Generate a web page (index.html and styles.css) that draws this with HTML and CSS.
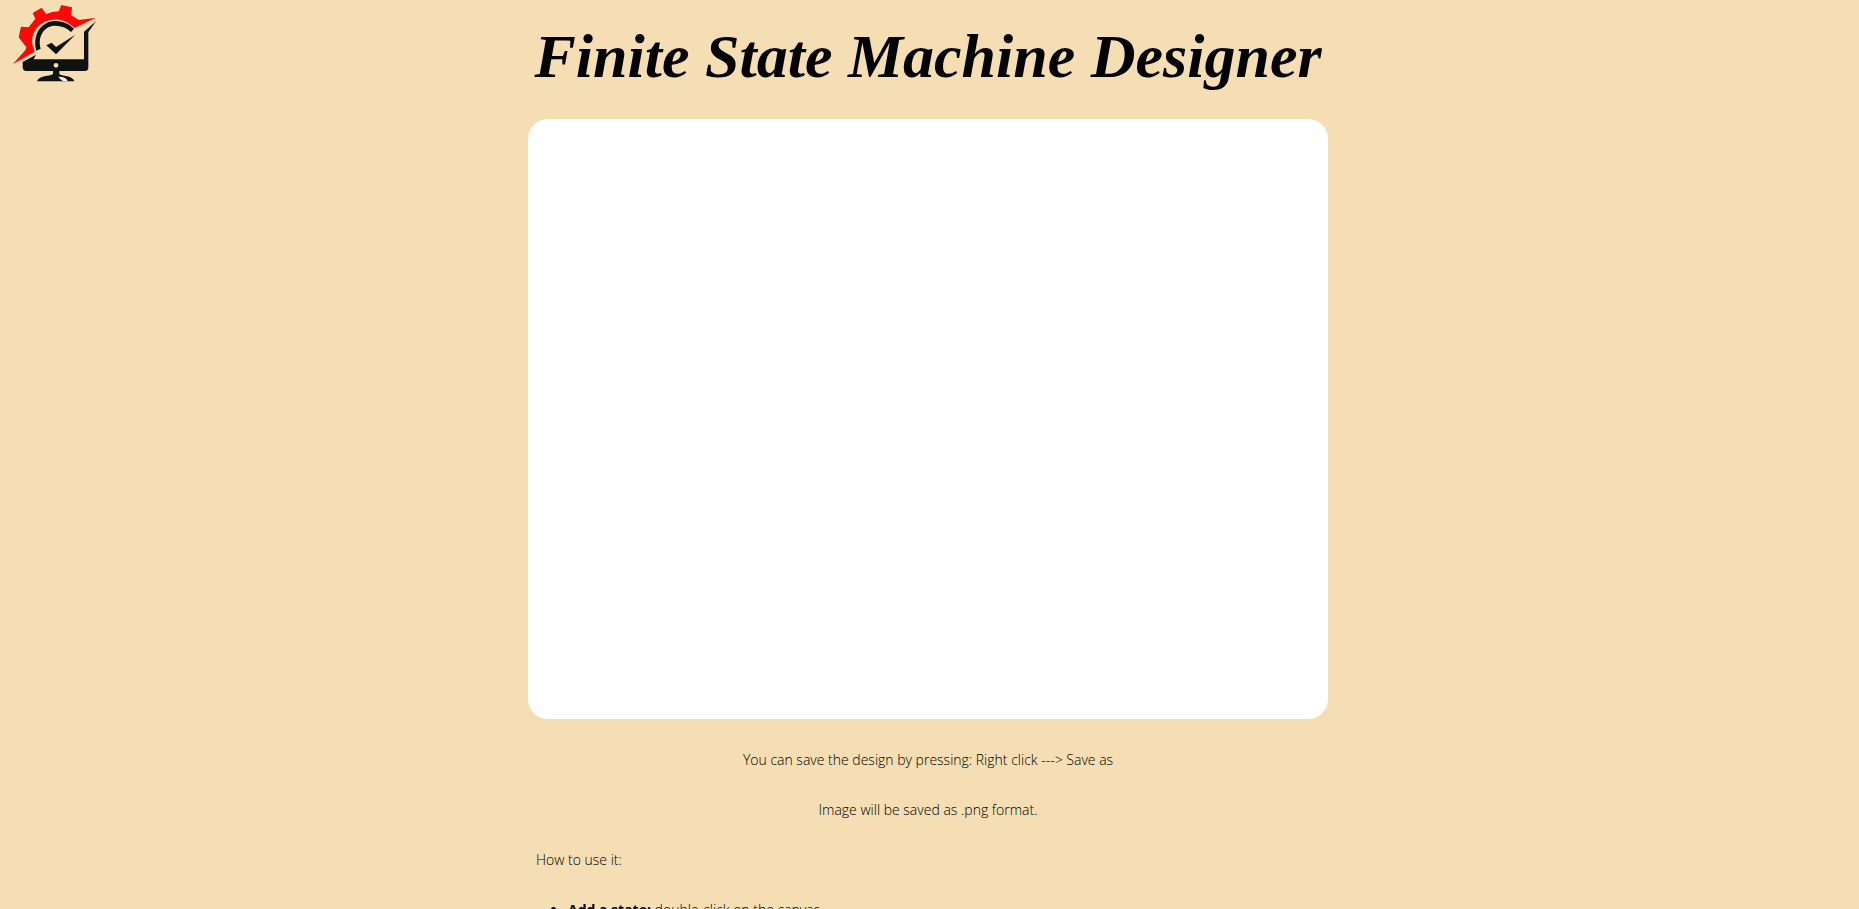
FILE: index.html
```html
<!DOCTYPE html>
<html lang="en">
<head>
  <meta charset="utf-8">
  <title>Finite State Machine Designer</title>
  <link rel="stylesheet" href="styles.css">
</head>
<body>
  <svg class="logo" viewBox="0 0 330 270" role="img" aria-label="Logo">
    <path fill="#fb0808" d="M39 192L77 149L79 142L56 112L63 80L86 82L106 56L98 39L125 23L138 42Q157 34 176 34L184 15L216 22L214 46L236 60L288 53L224 84L205 70Q184 57 161 59C118 61 90 98 98 136L104 155L94 161Z"/>
    <path fill="#101211" d="M109 152C96 104 124 63 166 63Q200 63 222 86L213 96Q193 77 166 77C133 77 112 108 122 146Z"/>
    <path fill="#101211" d="M139 136L155 128L168 141L226 104L168 163Z"/>
    <path fill="#101211" d="M68 186L108 164L101 178H252V95L288 64L265 97V204Q264 213 255 213H178V221Q180 225 197 228Q220 232 223 244H111Q114 232 138 228Q157 225 159 221V213H79Q68 213 68 201Z"/>
    <circle cx="168" cy="196" r="7" fill="#f5deb3"/>
    <path fill="#f9f1df" d="M175 230Q201 230 203 244H194Q184 243 175 230Z"/>
  </svg>
  <main class="page">
    <h1 class="title">Finite State Machine Designer</h1>
    <canvas class="board" width="800" height="600"></canvas>
    <section class="help">
      <p class="note">You can save the design by pressing: Right click ---&gt; Save as</p>
      <p class="note">Image will be saved as .png format.</p>
      <p>How to use it:</p>
      <ul class="steps">
        <li><b>Add a state:</b> double-click on the canvas</li>
      </ul>
    </section>
  </main>
</body>
</html>
```
FILE: styles.css
```css
html {
  height: 100%;
  overflow: hidden;
}

body {
  margin: 0;
  height: 100%;
  overflow: hidden;
  background: #f5deb3;
  color: #000;
  font: 300 14px/20px "Segoe UI", "Open Sans", sans-serif;
}

.logo {
  position: absolute;
  top: 0;
  left: 0;
  width: 110px;
  height: 90px;
}

.page {
  display: flex;
  flex-direction: column;
  align-items: center;
  padding-right: 3px;
}

.title {
  margin: 22px 0 29px;
  font: italic bold 62px/68px Georgia, "Liberation Serif", serif;
}

.board {
  max-width: 100%;
  border-radius: 20px;
  background: #fff;
}

.help {
  box-sizing: border-box;
  width: 100%;
  max-width: 800px;
  padding: 1px 8px 0;
}

.help p {
  margin: 30px 0;
}

.help .note {
  text-align: center;
}

.steps {
  margin: 0;
  padding-left: 32px;
}

.steps b {
  font-weight: 700;
}
```
